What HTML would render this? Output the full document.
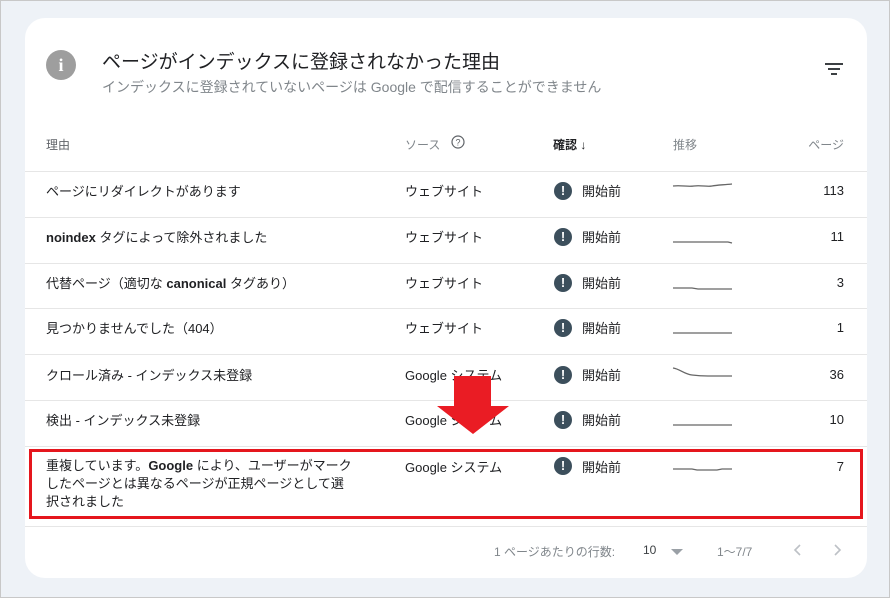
<!DOCTYPE html>
<html><head><meta charset="utf-8"><style>
*{margin:0;padding:0;box-sizing:border-box}
body{width:890px;height:598px;background:#eef2f7;border:1px solid #c8c8c8;position:relative;overflow:hidden;font-family:"Liberation Sans","Noto Sans CJK JP",sans-serif;color:#202124}
.card{position:absolute;left:24px;top:17px;width:842px;height:560px;background:#fff;border-radius:20px}
.a{position:absolute;white-space:nowrap}
.hl{position:absolute;left:24px;width:842px;height:1px;background:#e6e6e6}
.t{font-size:13px}
.ic{position:absolute;width:18px;height:18px;border-radius:50%;background:#3c4f5c;color:#fff;font-size:13px;font-weight:bold;text-align:center;line-height:18px;left:553px}
.st{left:581px}
.num{right:45px;text-align:right}
</style></head><body>
<div class="card"></div>
<div class="a" style="left:45px;top:49px;width:30px;height:30px;border-radius:50%;background:#9e9e9e;color:#fff;font-weight:bold;font-size:18px;text-align:center;line-height:30px;font-family:'Liberation Serif',serif">i</div>
<div class="a" style="left:101px;top:46px;font-size:19px;color:#202124">ページがインデックスに登録されなかった理由</div>
<div class="a" style="left:101px;top:76px;font-size:14px;color:#80868b">インデックスに登録されていないページは Google で配信することができません</div>
<svg class="a" style="left:824px;top:61px" width="18" height="14"><path d="M0 2h18M3 7h12M6 12h6" stroke="#3c4043" stroke-width="2"/></svg>

<div class="a t" style="left:45px;top:135px;color:#5f6368;font-size:12px">理由</div>
<div class="a t" style="left:404px;top:135px;color:#80868b;font-size:12px">ソース</div>
<svg class="a" style="left:450px;top:134px" width="14" height="14"><circle cx="7" cy="7" r="6" fill="none" stroke="#5f6368" stroke-width="1.2"/><text x="7" y="10.5" font-size="9" text-anchor="middle" fill="#5f6368" font-family="Liberation Sans">?</text></svg>
<div class="a t" style="left:552px;top:135px;font-size:12px;font-weight:bold">確認 <span style="font-weight:normal">↓</span></div>
<div class="a t" style="left:672px;top:135px;color:#80868b;font-size:12px">推移</div>
<div class="a t num" style="top:135px;color:#80868b;font-size:12px">ページ</div>

<div class="hl" style="top:170px"></div>
<div class="hl" style="top:216px"></div>
<div class="hl" style="top:262px"></div>
<div class="hl" style="top:307px"></div>
<div class="hl" style="top:353px"></div>
<div class="hl" style="top:399px"></div>
<div class="hl" style="top:445px"></div>
<div class="hl" style="top:525px"></div>

<div class="a t" style="left:45px;top:180px">ページにリダイレクトがあります</div>
<div class="a t" style="left:45px;top:226px"><b>noindex</b> タグによって除外されました</div>
<div class="a t" style="left:45px;top:272px">代替ページ（適切な <b>canonical</b> タグあり）</div>
<div class="a t" style="left:45px;top:317px">見つかりませんでした（404）</div>
<div class="a t" style="left:45px;top:364px">クロール済み - インデックス未登録</div>
<div class="a t" style="left:45px;top:409px">検出 - インデックス未登録</div>
<div class="a t" style="left:45px;top:456px;line-height:18px">重複しています。<b>Google</b> により、ユーザーがマーク<br>したページとは異なるページが正規ページとして選<br>択されました</div>

<div class="a t" style="left:404px;top:180px">ウェブサイト</div>
<div class="a t" style="left:404px;top:226px">ウェブサイト</div>
<div class="a t" style="left:404px;top:272px">ウェブサイト</div>
<div class="a t" style="left:404px;top:317px">ウェブサイト</div>
<div class="a t" style="left:404px;top:364px">Google システム</div>
<div class="a t" style="left:404px;top:409px">Google システム</div>
<div class="a t" style="left:404px;top:456px">Google システム</div>

<div class="ic" style="top:181px">!</div><div class="a t st" style="top:180px">開始前</div>
<div class="ic" style="top:227px">!</div><div class="a t st" style="top:226px">開始前</div>
<div class="ic" style="top:273px">!</div><div class="a t st" style="top:272px">開始前</div>
<div class="ic" style="top:318px">!</div><div class="a t st" style="top:317px">開始前</div>
<div class="ic" style="top:365px">!</div><div class="a t st" style="top:364px">開始前</div>
<div class="ic" style="top:410px">!</div><div class="a t st" style="top:409px">開始前</div>
<div class="ic" style="top:456px">!</div><div class="a t st" style="top:456px">開始前</div>

<svg class="a" style="left:671px;top:178px" width="62" height="300" fill="none" stroke="#666" stroke-width="1.3">
<path d="M1 7 C10 6 15 8 22 7 S35 8 40 7 S50 6 60 5"/>
<path d="M1 63 H56 L60 64"/>
<path d="M1 109 H20 L26 110 H60"/>
<path d="M1 154 H60"/>
<path d="M1 189 C8 190 12 195 20 196 S30 197 36 197 H60"/>
<path d="M1 246 H60"/>
<path d="M1 290 H20 L25 291 H45 L50 290 H60"/>
</svg>

<div class="a t num" style="top:182px">113</div>
<div class="a t num" style="top:228px">11</div>
<div class="a t num" style="top:274px">3</div>
<div class="a t num" style="top:319px">1</div>
<div class="a t num" style="top:366px">36</div>
<div class="a t num" style="top:411px">10</div>
<div class="a t num" style="top:458px">7</div>

<div class="a" style="left:28px;top:448px;width:834px;height:70px;border:3px solid #e5161d"></div>
<svg class="a" style="left:436px;top:375px" width="74" height="60"><path d="M17 0H54V30H72L36 58L0 30H17Z" fill="#ea1c24"/></svg>

<div class="a" style="left:493px;top:542px;font-size:12px;color:#80868b">1 ページあたりの行数:</div>
<div class="a" style="left:642px;top:542px;font-size:12px;color:#3c4043">10</div>
<svg class="a" style="left:670px;top:548px" width="12" height="6"><path d="M0 0H12L6 6Z" fill="#9aa0a6"/></svg>
<div class="a" style="left:716px;top:542px;font-size:12px;color:#80868b">1〜7/7</div>
<svg class="a" style="left:792px;top:542px" width="10" height="14" fill="none" stroke="#bdc1c6" stroke-width="1.6"><path d="M7 2L2 7L7 12"/></svg>
<svg class="a" style="left:831px;top:542px" width="10" height="14" fill="none" stroke="#bdc1c6" stroke-width="1.6"><path d="M3 2L8 7L3 12"/></svg>
</body></html>
